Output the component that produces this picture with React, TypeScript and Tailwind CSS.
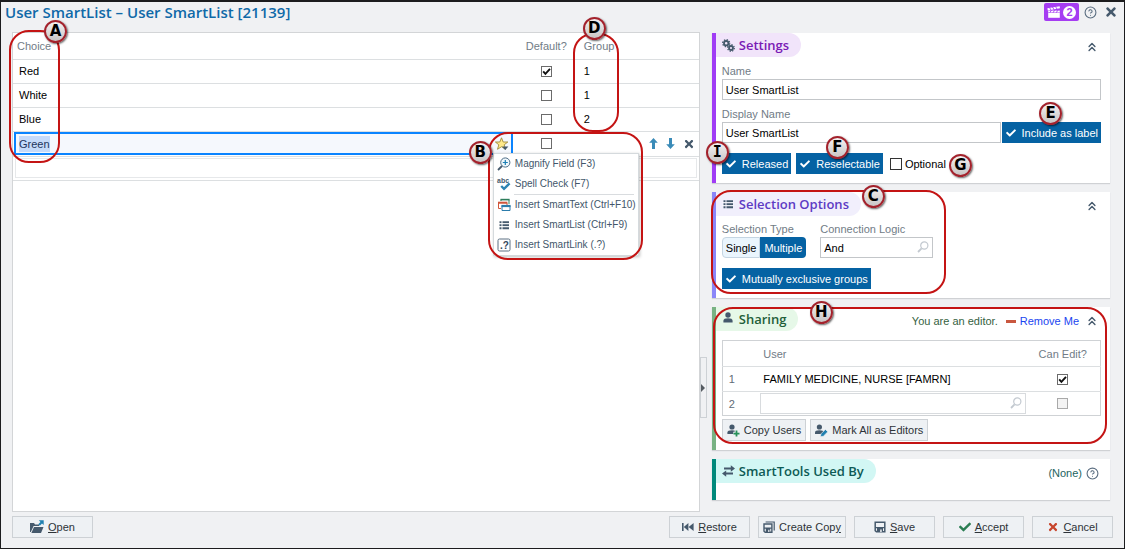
import { useState, type ReactNode } from "react";
import { ChevronsUp, CircleHelp } from "lucide-react";
import { FaCheck, FaTimes } from "react-icons/fa";

function Callout({ letter, className }: { letter: string; className: string }) {
  return (
    <span
      className={`absolute z-30 flex size-[23px] items-center justify-center rounded-full border-2 border-[#a3222c] bg-linear-to-b from-[#f4f2f2] to-[#c9c5c5] text-[15px] leading-none font-bold text-black shadow-[1px_1px_2px_rgba(0,0,0,0.6)] ${
        letter === "I" ? "font-['DejaVu_Sans_Mono',monospace]" : "font-['DejaVu_Sans',sans-serif]"
      } ${className}`}
    >
      {letter}
    </span>
  );
}

function Outline({ className }: { className: string }) {
  return <span className={`pointer-events-none absolute z-20 rounded-[20px] border-2 border-[#c41414] ${className}`} />;
}

function Checkbox({ label, checked = false, disabled = false, large = false }: { label: string; checked?: boolean; disabled?: boolean; large?: boolean }) {
  return (
    <span className="relative inline-grid align-middle">
      <input
        type="checkbox"
        aria-label={label}
        defaultChecked={checked}
        disabled={disabled}
        className={`peer appearance-none border bg-white disabled:border-[#a9a9a9] disabled:bg-[#f3f3f3] ${large ? "size-3 border-[#333]" : "size-[11px] border-[#6b6b6b]"}`}
      />
      <svg viewBox="0 0 11 11" className="pointer-events-none absolute inset-0 hidden size-full peer-checked:block">
        <path d="M2.2 5.4 4.4 7.8 9 2.8" fill="none" stroke="#111" strokeWidth="1.9" />
      </svg>
    </span>
  );
}

function GearsIcon() {
  return (
    <svg viewBox="0 0 13 13" className="size-[13px]" fill="none" stroke="#45596c">
      <circle cx="4.2" cy="4.2" r="2.2" strokeWidth="1.8" />
      <circle cx="4.2" cy="4.2" r="3.5" strokeWidth="1.3" strokeDasharray="1.37 1.38" />
      <circle cx="9" cy="9" r="2" strokeWidth="1.8" />
      <circle cx="9" cy="9" r="3.3" strokeWidth="1.3" strokeDasharray="1.3 1.29" />
    </svg>
  );
}

function PersonIcon() {
  return (
    <svg viewBox="0 0 10 11" className="h-[11px] w-2.5" fill="#45596c">
      <circle cx="5" cy="3" r="2.7" />
      <path d="M.4 10.6V8.7C.4 7 2 6.2 5 6.2s4.6.8 4.6 2.5v1.9z" />
    </svg>
  );
}

function SearchIcon({ className = "" }: { className?: string }) {
  return (
    <svg viewBox="0 0 12 12" className={`size-3 ${className}`} fill="none" stroke="#c3c9d0">
      <circle cx="7.3" cy="4.5" r="3.6" strokeWidth="1.2" />
      <path d="M4.6 7.3 1 11" strokeWidth="1.8" />
    </svg>
  );
}

function ListIcon() {
  return (
    <svg viewBox="0 0 12 12" className="size-3" fill="#45596c">
      <path d="M1.5 2h2v2h-2zM4.5 2H11v2H4.5zM1.5 5h2v2h-2zM4.5 5H11v2H4.5zM1.5 8h2v2h-2zM4.5 8H11v2H4.5z" transform="translate(0 .3)" />
      <path d="M0 4.1h12v.8H0zM0 7.1h12v.8H0z" fill="#fff" fillOpacity=".6" />
    </svg>
  );
}

function MagnifyIcon() {
  return (
    <svg viewBox="0 0 14 14" className="size-3.5" fill="none">
      <circle cx="8.3" cy="5.5" r="4.6" fill="#eef7fc" stroke="#4d6c86" />
      <path d="M5 9 1 13" stroke="#45596c" strokeWidth="1.8" />
      <path d="M8.3 3v5M5.8 5.5h5" stroke="#1b7fb5" strokeWidth="1.2" />
    </svg>
  );
}

function SpellIcon() {
  return (
    <svg viewBox="0 0 14 14" className="size-3.5 overflow-visible">
      <text x="0" y="6" fontSize="7" fontWeight="bold" fill="#45596c" fontFamily="Liberation Sans, sans-serif">abc</text>
      <path d="M4.2 9 7 11.8 12.6 6.4" fill="none" stroke="#2d84b3" strokeWidth="2.4" />
    </svg>
  );
}

function SmartTextIcon() {
  return (
    <svg viewBox="0 0 14 14" className="size-3.5" fill="none">
      <path d="M4 3V1.5h8V6" stroke="#2e7d5b" />
      <path d="M3.5 1.6h9" stroke="#2e7d5b" strokeWidth="1.6" />
      <path d="M4 10.5H1.5V5H10v2" stroke="#d0563b" />
      <path d="M1 4.6h9.4" stroke="#d0563b" strokeWidth="1.8" />
      <path d="M5 7.5h8v5H5z" fill="#fff" stroke="#2b7cab" />
      <path d="M4.5 8h9" stroke="#2b7cab" strokeWidth="2.2" />
    </svg>
  );
}

function SmartLinkIcon() {
  return (
    <svg viewBox="0 0 14 14" className="size-3.5">
      <rect x="1" y="1" width="12" height="12" rx="1.5" fill="#fff" stroke="#5c7183" />
      <text x="3" y="10.6" fontSize="10" fontWeight="bold" fill="#34495b" fontFamily="Liberation Sans, sans-serif">.?</text>
    </svg>
  );
}

function StarIcon() {
  return (
    <svg viewBox="0 0 14 14" className="size-3.5">
      <path d="M6.5.8 8.2 5H12.8L9.2 7.8l1.3 4.5-4-2.6-4 2.6 1.3-4.5L.4 5H4.8z" fill="#ffe98a" stroke="#a08a3c" strokeWidth=".9" />
      <path d="M7 9.6h6.4L10.2 13z" fill="#45596c" />
    </svg>
  );
}

function MoveIcon({ down = false }: { down?: boolean }) {
  return (
    <svg viewBox="0 0 9 11" className={`h-[11px] w-[9px] ${down ? "rotate-180" : ""}`} fill="#3a8bb8">
      <path d="M4.5 0 8.8 4.8H6V11H3V4.8H.2z" />
    </svg>
  );
}

function OpenIcon() {
  return (
    <svg viewBox="0 0 14 14" className="size-3.5">
      <path d="M0 3h4l1 1.5h4V6H3.6L.8 12H0z" fill="#45596c" />
      <path d="M4 7h9.5L11 13H1.4z" fill="#45596c" />
      <path d="M8.8.3h4.9v4.8L12 3.6 9.8 5.8 8.3 4.2 10.5 2z" fill="#2180b0" />
    </svg>
  );
}

function RestoreIcon() {
  return (
    <svg viewBox="0 0 12 10" className="h-2.5 w-3" fill="#45596c">
      <path d="M0 1h1.6v8H0zM6.4 1v8L1.8 5zM11.6 1v8L6.6 5z" />
    </svg>
  );
}

function SaveIcon() {
  return (
    <svg viewBox="0 0 12 12" className="size-3">
      <path d="M1.2 1.2h9.6v9.6H2.4L1.2 9.6z" fill="none" stroke="#45596c" strokeWidth="1.5" />
      <path d="M1 6h10v1.3H1zM3 7.3h6V11H3z" fill="#45596c" />
      <path d="M6.2 8.6h1.5V11H6.2z" fill="#eef1f4" />
    </svg>
  );
}

function CopyIcon() {
  return (
    <svg viewBox="0 0 12 12" className="size-3">
      <path d="M2.6 1h8.6v8.4" fill="none" stroke="#45596c" strokeWidth="1.2" />
      <path d="M1 3h7.9v8.2H2.2L1 10.2z" fill="none" stroke="#45596c" strokeWidth="1.4" />
      <path d="M1 6.6h7.8v1.2H1zM2.8 7.6h4.4V11H2.8z" fill="#45596c" />
      <path d="M5.2 8.8h1.2V11H5.2z" fill="#eef1f4" />
    </svg>
  );
}

function PersonPlus() {
  return (
    <svg viewBox="0 0 13 13" className="size-[13px]">
      <circle cx="5" cy="3" r="2.6" fill="#45596c" />
      <path d="M.4 10V8.6C.4 7 2 6.2 5 6.2s4.2.8 4.2 2V10z" fill="#45596c" />
      <path d="M9.4 6.2v6.4M6.2 9.4h6.6" stroke="#eef1f4" strokeWidth="3.4" />
      <path d="M9.5 6.6v6M6.5 9.6h6" stroke="#27915a" strokeWidth="1.8" />
    </svg>
  );
}

function PersonEdit() {
  return (
    <svg viewBox="0 0 13 13" className="size-[13px]">
      <circle cx="4.4" cy="3" r="2.6" fill="#45596c" />
      <path d="M0 10V8.6C0 7 1.4 6.2 4.4 6.2s4.2.8 4.2 2V10z" fill="#45596c" />
      <path d="m5.4 12.8.6-3L10.4 5.4l2.4 2.4-4.4 4.4z" fill="#2180b0" stroke="#eef1f4" strokeWidth=".7" />
    </svg>
  );
}

function SwapIcon() {
  return (
    <svg viewBox="0 0 13 12" className="h-3 w-[13px]" fill="#45596c">
      <path d="M2 2.5h6.8V.2L13 3.5 8.8 6.8V4.6H2zM11 7.5H4.2V5.4L0 8.6l4.2 3.2V9.6H11z" />
    </svg>
  );
}

function Clapper() {
  return (
    <svg viewBox="0 0 14 12" className="h-3 w-3.5" fill="#fff">
      <path d="M1.2 6.8h11.6v5H1.2z" />
      <path d="M.4 2.2 12.6.2l.4 2L.8 4.4z" />
      <path d="M1.2 4.6h11.6v1.8H1.2z" />
      <path d="m2.4 1.4 1.8 3M5.4.9l1.8 3M8.4.4l1.8 3M4.4 4.2 2.8 6.8M7.6 4.2 6 6.8M10.8 4.2 9.2 6.8" stroke="#a63df2" strokeWidth=".9" />
    </svg>
  );
}

type Tone = "settings" | "selection" | "sharing" | "tools";
const tones: Record<Tone, { edge: string; pill: string }> = {
  settings: { edge: "border-l-[#a03cf5]", pill: "bg-[#f1e4fa] text-[#7a1bb5]" },
  selection: { edge: "border-l-[#8a86f8]", pill: "bg-[#f1effc] text-[#5d3bc4]" },
  sharing: { edge: "border-l-[#78b283]", pill: "bg-[#e6f8e8] text-[#1f5f3a]" },
  tools: { edge: "border-l-[#00897b]", pill: "bg-[#d2f7f4] text-[#0d5a55]" },
};

function Card({ tone, icon, title, aside, children }: { tone: Tone; icon: ReactNode; title: string; aside: ReactNode; children?: ReactNode }) {
  return (
    <section className={`relative border-l-4 bg-white pb-[9px] shadow-[0_1px_1px_#cfd1d4] ${tones[tone].edge}`}>
      <header className="flex items-center justify-between pr-[11px]">
        <h2 className={`flex h-6 items-center gap-1 rounded-r-full pr-3 pl-1.5 font-['Open_Sans',sans-serif] text-[13px] font-semibold ${tones[tone].pill}`}>
          <span className="flex w-[13px] justify-center">{icon}</span>
          {title}
        </h2>
        <div className="flex items-center gap-1.5 pt-1">{aside}</div>
      </header>
      {children && <div className="pr-[9px] pl-1.5">{children}</div>}
    </section>
  );
}

function Collapse() {
  return (
    <button type="button" aria-label="Collapse" className="text-[#45596c]">
      <ChevronsUp size={14} strokeWidth={2.4} />
    </button>
  );
}

function Toggle({ children }: { children: ReactNode }) {
  const [on, setOn] = useState(true);
  return (
    <button
      type="button"
      aria-pressed={on}
      onClick={() => setOn(!on)}
      className="flex h-[21px] items-center gap-1.5 bg-[#0562a3] pr-[3px] pl-1 text-white"
    >
      <FaCheck size={10} className={on ? "" : "invisible"} />
      {children}
    </button>
  );
}

function GrayButton({ icon, children, className = "" }: { icon: ReactNode; children: ReactNode; className?: string }) {
  return (
    <button type="button" className={`flex h-[22px] items-center justify-center gap-1 border border-[#cdd1d5] bg-[#eef1f4] text-[#2d3338] ${className}`}>
      {icon}
      <span>{children}</span>
    </button>
  );
}

const choices = [
  { name: "Red", checked: true, group: "1" },
  { name: "White", checked: false, group: "1" },
  { name: "Blue", checked: false, group: "2" },
];

const fieldClass = "h-[21px] w-full border border-[#c3c6c9] bg-white px-[3px] text-black outline-none";

function MenuItem({ icon, children }: { icon: ReactNode; children: ReactNode }) {
  return (
    <li>
      <button type="button" className="flex h-5 w-full items-center gap-1 pl-[3px] whitespace-nowrap text-[#42566a]">
        <span className="flex w-3.5 justify-center">{icon}</span>
        {children}
      </button>
    </li>
  );
}

function ChoicePanel() {
  return (
    <div className="relative border border-[#d3d5d7] bg-white">
      <table className="w-full table-fixed border-collapse text-left text-black">
        <colgroup>
          <col />
          <col className="w-[67px]" />
          <col className="w-[56px]" />
          <col className="w-[63px]" />
        </colgroup>
        <thead>
          <tr className="h-[26px] border-b border-[#dcdfe1] text-[#717c86]">
            <th className="pl-1 font-normal">Choice</th>
            <th className="text-center font-normal">Default?</th>
            <th className="pl-1 font-normal">Group</th>
            <th />
          </tr>
        </thead>
        <tbody>
          {choices.map((c) => (
            <tr key={c.name} className="h-6 border-b border-[#dcdfe1]">
              <td className="pl-1.5">{c.name}</td>
              <td className="text-center leading-none">
                <Checkbox label={`${c.name} is default`} checked={c.checked} />
              </td>
              <td className="pl-1">{c.group}</td>
              <td />
            </tr>
          ))}
          <tr className="h-[25px] border-b border-[#dcdfe1]">
            <td>
              <div className="ml-px flex h-[23px] items-center border-2 border-[#0a84ff] bg-[#f5f8fd] pr-0.5 pl-[3px]">
                <span className="bg-[#c5dafa] text-[#22345c]">Green</span>
                <button type="button" aria-label="Field tools" className="ml-auto">
                  <StarIcon />
                </button>
              </div>
            </td>
            <td className="text-center leading-none">
              <Checkbox label="Green is default" />
            </td>
            <td />
            <td>
              <div className="flex items-center justify-end gap-2 pr-1">
                <button type="button" aria-label="Move up"><MoveIcon /></button>
                <button type="button" aria-label="Move down"><MoveIcon down /></button>
                <button type="button" aria-label="Delete row" className="text-[#45596c]"><FaTimes size={12} /></button>
              </div>
            </td>
          </tr>
          <tr className="h-6 border-b border-[#dcdfe1]">
            <td colSpan={4}>
              <div className="mx-0.5 h-5 border border-[#e6e8ea]" />
            </td>
          </tr>
        </tbody>
      </table>

      <ul className="absolute top-[120px] right-[60px] z-10 w-[146px] border border-[#d5dadd] bg-white text-[10px] shadow-[1px_1px_3px_rgba(0,0,0,0.25)]">
        <MenuItem icon={<MagnifyIcon />}>Magnify Field (F3)</MenuItem>
        <MenuItem icon={<SpellIcon />}>Spell Check (F7)</MenuItem>
        <li className="mr-1 ml-5 border-b border-[#d9dcdf]" />
        <MenuItem icon={<SmartTextIcon />}>Insert SmartText (Ctrl+F10)</MenuItem>
        <MenuItem icon={<ListIcon />}>Insert SmartList (Ctrl+F9)</MenuItem>
        <MenuItem icon={<SmartLinkIcon />}>Insert SmartLink (.?)</MenuItem>
      </ul>

      <Outline className="-top-[3px] -left-1 h-[133px] w-[51px]" />
      <Callout letter="A" className="-top-[13px] left-[31px]" />
      <Outline className="top-0 right-[80px] h-[99px] w-[46px]" />
      <Callout letter="D" className="-top-4 right-[93px]" />
      <Outline className="top-[99px] right-[56px] h-[128px] w-[155px]" />
      <Callout letter="B" className="top-[108px] right-[207px]" />

      <button type="button" aria-label="Collapse side panel" className="absolute top-[324px] -right-2 flex h-[61px] w-[7px] items-center justify-center border border-[#cdd1d5] bg-[#f0f1f3]">
        <svg viewBox="0 0 4 8" className="h-2 w-1 shrink-0" fill="#555b61"><path d="M0 0l4 4-4 4z" /></svg>
      </button>
    </div>
  );
}

function SidePanel() {
  return (
    <div className="flex flex-col gap-[9px] pt-px">
      <Card tone="settings" icon={<GearsIcon />} title="Settings" aside={<Collapse />}>
        <label htmlFor="name" className="block pt-1.5 leading-4 text-[#717c86]">Name</label>
        <input id="name" defaultValue="User SmartList" className={fieldClass} />
        <label htmlFor="display" className="mt-1.5 block leading-4 text-[#717c86]">Display Name</label>
        <div className="relative flex">
          <input id="display" defaultValue="User SmartList" className={`${fieldClass} min-w-0 flex-1`} />
          <div className="ml-px shrink-0"><Toggle>Include as label</Toggle></div>
          <Callout letter="E" className="-top-5 right-[39px]" />
        </div>
        <div className="relative mt-2.5 flex items-center gap-[5px]">
          <Toggle>Released</Toggle>
          <Toggle>Reselectable</Toggle>
          <label className="ml-0.5 flex items-center gap-[3px] text-black">
            <Checkbox label="Optional" large /> Optional
          </label>
          <Callout letter="I" className="-top-3 -left-4" />
          <Callout letter="F" className="-top-[17px] left-[104px]" />
          <Callout letter="G" className="top-px left-[227px]" />
        </div>
      </Card>

      <Card tone="selection" icon={<ListIcon />} title="Selection Options" aside={<Collapse />}>
        <div className="flex gap-3.5 pt-[5px]">
          <fieldset>
            <legend className="leading-4 text-[#717c86]">Selection Type</legend>
            <div className="flex h-[21px]">
              <button type="button" className="rounded-l-sm border border-[#c5d5e2] bg-[#eaf5fd] px-[3px] text-black">Single</button>
              <button type="button" aria-pressed="true" className="rounded-r-sm bg-[#0562a3] px-1 text-white">Multiple</button>
            </div>
          </fieldset>
          <div className="w-[113px]">
            <label htmlFor="logic" className="block leading-4 text-[#717c86]">Connection Logic</label>
            <div className="relative">
              <input id="logic" defaultValue="And" className={fieldClass} />
              <SearchIcon className="absolute top-1 right-1" />
            </div>
          </div>
        </div>
        <div className="mt-2.5 flex"><Toggle>Mutually exclusive groups</Toggle></div>
        <Outline className="-top-0.5 -left-[5px] h-[104px] w-[235px]" />
        <Callout letter="C" className="-top-[7px] left-[146px]" />
      </Card>

      <Card
        tone="sharing"
        icon={<span className="pb-1"><PersonIcon /></span>}
        title="Sharing"
        aside={
          <>
            <span className="text-[#35623f]">You are an editor.</span>
            <a href="#remove" className="ml-0.5 flex items-center gap-1 text-[#1a45f0]">
              <span className="h-[3px] w-2.5 bg-[#c9573f]" /> Remove Me
            </a>
            <Collapse />
          </>
        }
      >
        <table className="mt-[9px] w-full table-fixed border border-[#cfd2d5] text-left">
          <colgroup>
            <col className="w-9" />
            <col />
            <col className="w-[75px]" />
          </colgroup>
          <thead>
            <tr className="h-[26px] border-b border-[#dcdfe1] text-[#717c86]">
              <th />
              <th className="pl-[5px] font-normal">User</th>
              <th className="text-center font-normal">Can Edit?</th>
            </tr>
          </thead>
          <tbody>
            <tr className="h-[25px] border-b border-[#dcdfe1]">
              <td className="pl-1.5 text-[#5f6b76]">1</td>
              <td className="pl-[5px] whitespace-nowrap text-black">FAMILY MEDICINE, NURSE [FAMRN]</td>
              <td className="text-center leading-none"><Checkbox label="Can edit, user 1" checked /></td>
            </tr>
            <tr className="h-6">
              <td className="pl-1.5 text-[#5f6b76]">2</td>
              <td>
                <div className="relative ml-0.5">
                  <input aria-label="Add user" className="block h-[21px] w-full border border-[#d8dbde] bg-white px-1 outline-none" />
                  <SearchIcon className="absolute top-1 right-1" />
                </div>
              </td>
              <td className="text-center leading-none"><Checkbox label="Can edit, user 2" disabled /></td>
            </tr>
          </tbody>
        </table>
        <div className="mt-[3px] flex gap-1">
          <GrayButton icon={<PersonPlus />} className="px-1">Copy Users</GrayButton>
          <GrayButton icon={<PersonEdit />} className="px-1">Mark All as Editors</GrayButton>
        </div>
        <Outline className="top-0 right-[3px] bottom-1.5 -left-[3px]" />
        <Callout letter="H" className="-top-1.5 left-[94px]" />
      </Card>

      <Card
        tone="tools"
        icon={<SwapIcon />}
        title="SmartTools Used By"
        aside={
          <div className="flex items-center gap-1 text-[#1d6460]">
            (None) <CircleHelp size={13} className="text-[#5a6d80]" />
          </div>
        }
      >
        <div className="h-2" />
      </Card>
    </div>
  );
}

export default function App() {
  return (
    <div className="flex min-h-screen flex-col border border-t-2 border-[#1c1c1e] bg-[#f0f1f3] pr-3.5 font-['Liberation_Sans',Arial,sans-serif] text-[11px] leading-4">
      <header className="-mr-2 flex h-[30px] items-center justify-between pb-2.5 pl-1">
        <h1 className="font-['Open_Sans',sans-serif] text-[15px] font-semibold text-[#0f69a8]">User SmartList – User SmartList [21139]</h1>
        <div className="flex items-center">
          <button type="button" aria-label="Videos" className="flex h-[18px] items-center gap-0.5 rounded-xs bg-[#a63df2] px-[3px] text-white">
            <Clapper />
            <span className="flex size-[13px] items-center justify-center rounded-full bg-white text-[11px] font-bold text-[#a63df2]">2</span>
          </button>
          <button type="button" aria-label="Help" className="ml-[5px] text-[#5a6d80]"><CircleHelp size={13} /></button>
          <button type="button" aria-label="Close" className="ml-[7px] text-[#45596c]"><FaTimes size={14} /></button>
        </div>
      </header>

      <main className="grid flex-1 grid-cols-[minmax(0,19fr)_minmax(0,11fr)] gap-3 pl-[11px]">
        <ChoicePanel />
        <SidePanel />
      </main>

      <footer className="-mr-[3px] flex gap-2 pt-1 pb-2.5 pl-[11px]">
        <GrayButton icon={<OpenIcon />} className="mr-auto w-[81px]"><u>O</u>pen</GrayButton>
        <GrayButton icon={<RestoreIcon />} className="w-[81px]"><u>R</u>estore</GrayButton>
        <GrayButton icon={<CopyIcon />} className="w-[88px]">Create Cop<u>y</u></GrayButton>
        <GrayButton icon={<SaveIcon />} className="w-[81px]"><u>S</u>ave</GrayButton>
        <GrayButton icon={<FaCheck size={12} color="#2a7d52" />} className="w-[81px]"><u>A</u>ccept</GrayButton>
        <GrayButton icon={<FaTimes size={12} color="#c8452c" />} className="w-[81px]"><u>C</u>ancel</GrayButton>
      </footer>
    </div>
  );
}
